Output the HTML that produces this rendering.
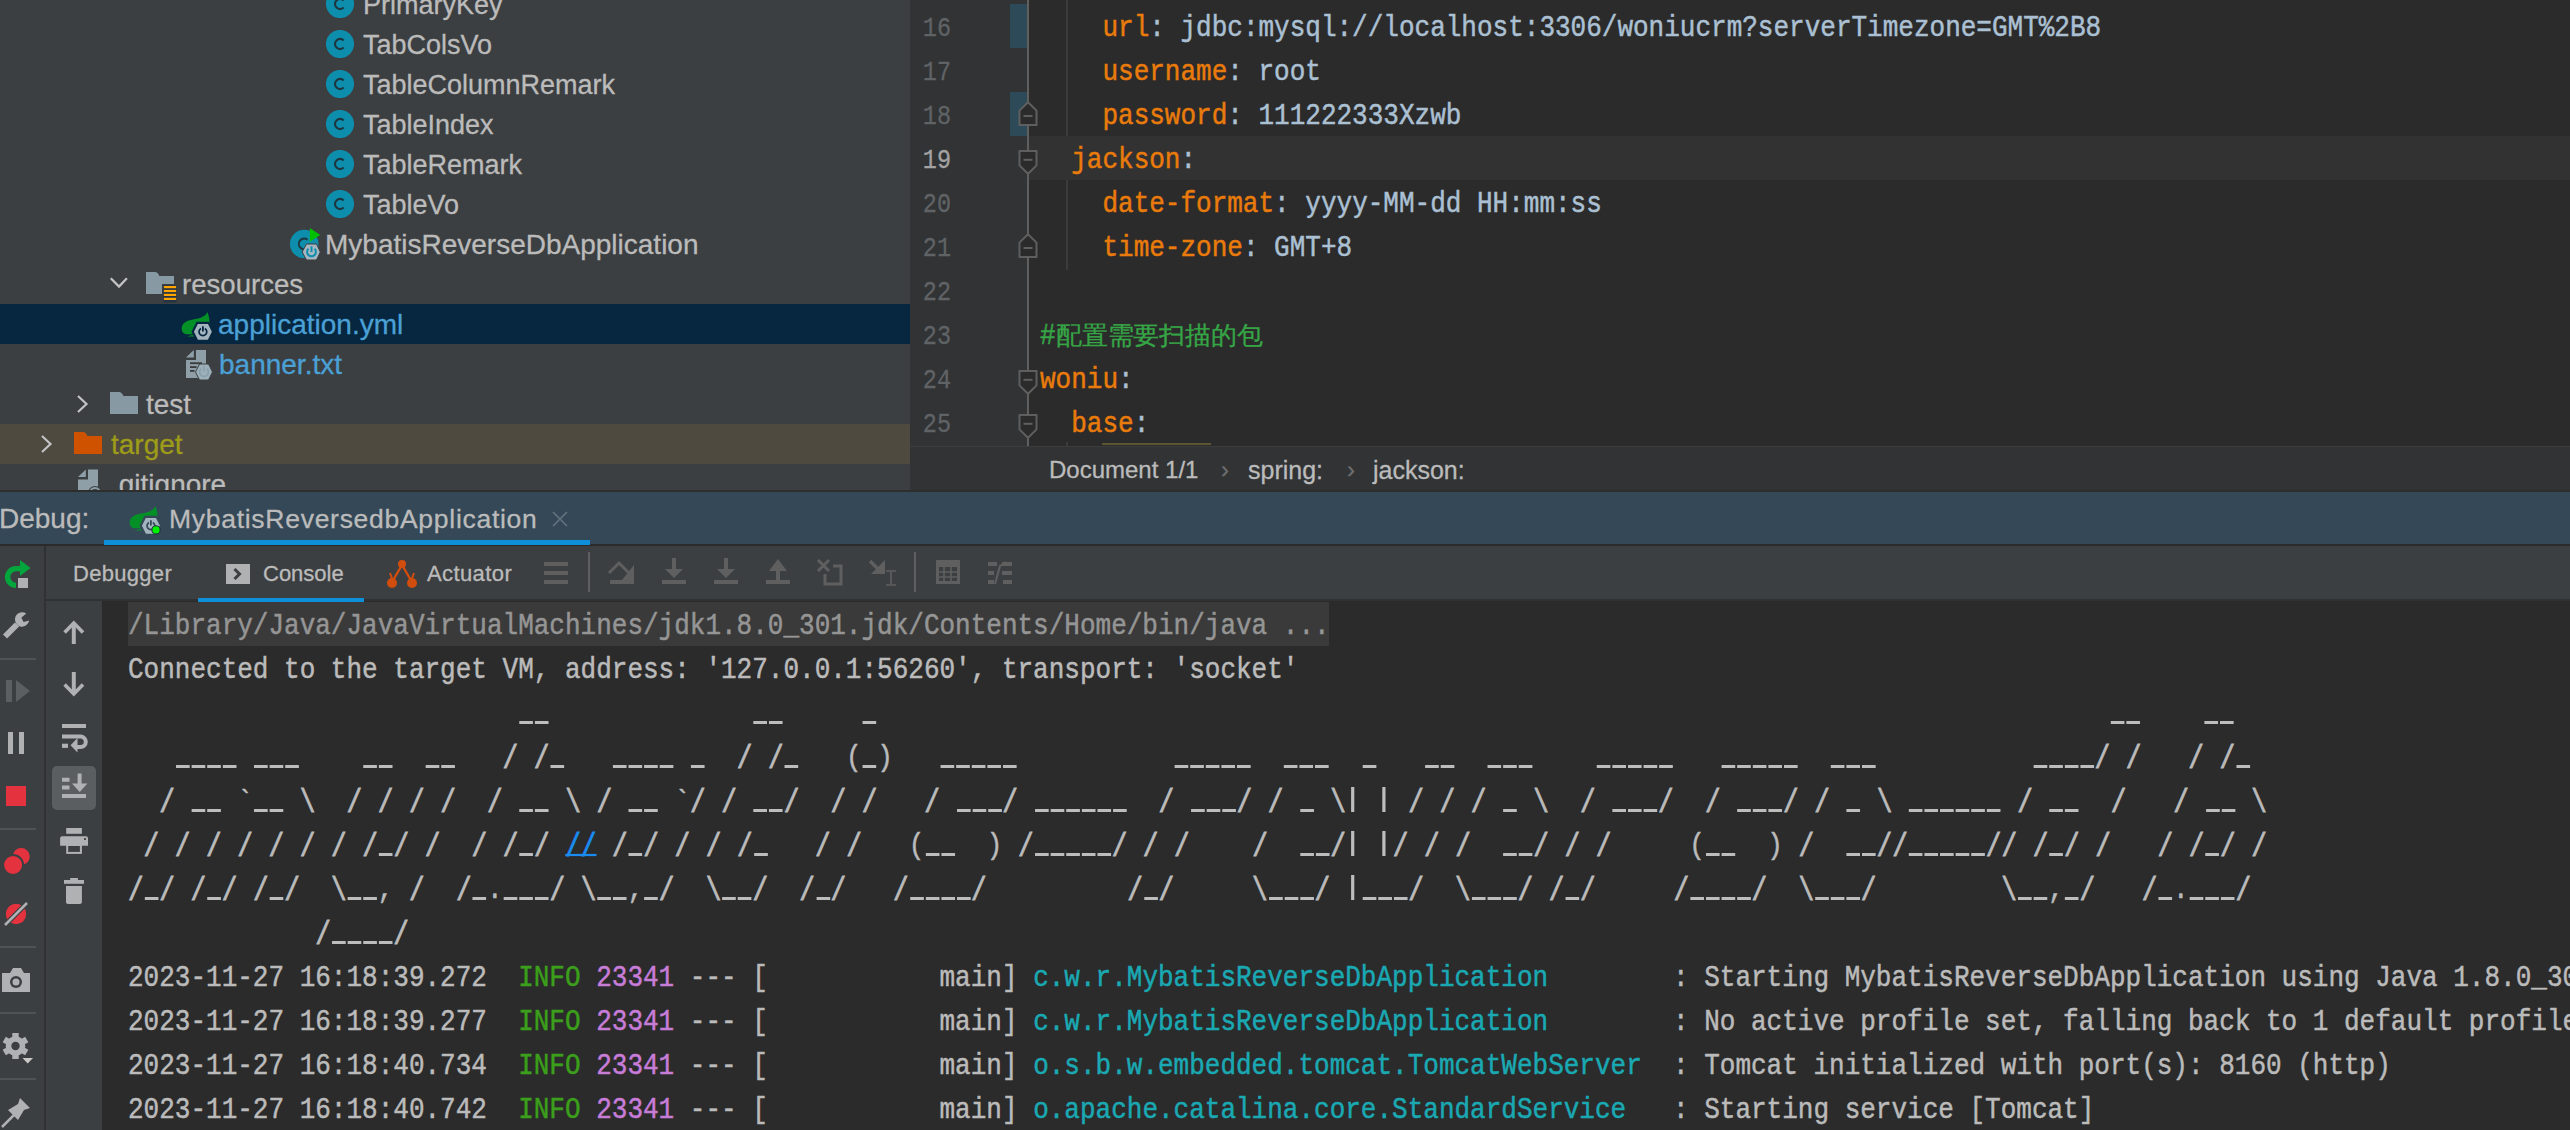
<!DOCTYPE html>
<html><head><meta charset="utf-8"><style>
*{margin:0;padding:0;box-sizing:border-box}
html,body{width:2570px;height:1130px;overflow:hidden;background:#2b2b2b}
body{position:relative;font-family:"Liberation Sans",sans-serif;color:#bbbbbb;-webkit-text-stroke:0.3px currentColor}
.a{position:absolute}
.m{font-family:"Liberation Mono",monospace;font-size:30px;white-space:pre;line-height:44px;transform:scaleX(0.86683);transform-origin:0 0;-webkit-text-stroke:0.5px currentColor}
.t{position:absolute;white-space:pre;font-size:27px;line-height:40px;height:40px;color:#bbbbbb;padding-top:1px}
.ln{position:absolute;left:850px;width:101px;text-align:right;font-family:"Liberation Mono",monospace;font-size:28px;line-height:44px;color:#606366;transform:scaleX(0.839);transform-origin:100% 0}
.k{color:#e97b0c}
.v{color:#abc0d3}
.g{color:#36a546}
.cjk{display:inline-block;font-size:25.3px;transform:scaleX(1.198);transform-origin:0 50%;-webkit-text-stroke:0.3px currentColor}
.ig{position:absolute;width:2px;background:#3b3b3b}
.lnk{color:#1a8cf0;text-decoration:underline;text-decoration-thickness:2px;text-underline-offset:-1.5px}
.sl{display:inline-block;transform:translateY(1.3px) scaleY(1.1);-webkit-text-stroke:0.75px currentColor}
.pp{display:inline-block;height:44px;vertical-align:top;color:transparent;-webkit-text-stroke:0;background:linear-gradient(#bdbdbd,#bdbdbd) 5.9px 7px/3.7px 25px no-repeat}
.u{display:inline-block;height:44px;vertical-align:top;color:transparent;-webkit-text-stroke:0;background:linear-gradient(to right,#bdbdbd 0,#bdbdbd 15.2px,transparent 15.2px,transparent 18px) 1.4px 29px/18px 3px repeat-x}
.info{color:#3b9f1b}
.pid{color:#c77dd8}
.lg{color:#1aa9b3}
</style></head><body>
<div class="a" style="left:0;top:0;width:910px;height:490px;background:#3c3f41"></div>
<div class="a" style="left:0;top:304px;width:910px;height:40px;background:#06273f"></div>
<div class="a" style="left:0;top:424px;width:910px;height:40px;background:#4f4a40"></div>
<svg class="a" style="left:326px;top:-10px" width="28" height="28" viewBox="0 0 28 28"><circle cx="14" cy="14" r="14.1" fill="#0d8eac"/><path d="M17.7 10.4 A5.1 5.1 0 1 0 17.7 17.6" fill="none" stroke="#1d3640" stroke-width="2.1"/></svg>
<div class="t" style="left:363px;top:-16px">PrimaryKey</div>
<svg class="a" style="left:326px;top:30px" width="28" height="28" viewBox="0 0 28 28"><circle cx="14" cy="14" r="14.1" fill="#0d8eac"/><path d="M17.7 10.4 A5.1 5.1 0 1 0 17.7 17.6" fill="none" stroke="#1d3640" stroke-width="2.1"/></svg>
<div class="t" style="left:363px;top:24px">TabColsVo</div>
<svg class="a" style="left:326px;top:70px" width="28" height="28" viewBox="0 0 28 28"><circle cx="14" cy="14" r="14.1" fill="#0d8eac"/><path d="M17.7 10.4 A5.1 5.1 0 1 0 17.7 17.6" fill="none" stroke="#1d3640" stroke-width="2.1"/></svg>
<div class="t" style="left:363px;top:64px">TableColumnRemark</div>
<svg class="a" style="left:326px;top:110px" width="28" height="28" viewBox="0 0 28 28"><circle cx="14" cy="14" r="14.1" fill="#0d8eac"/><path d="M17.7 10.4 A5.1 5.1 0 1 0 17.7 17.6" fill="none" stroke="#1d3640" stroke-width="2.1"/></svg>
<div class="t" style="left:363px;top:104px">TableIndex</div>
<svg class="a" style="left:326px;top:150px" width="28" height="28" viewBox="0 0 28 28"><circle cx="14" cy="14" r="14.1" fill="#0d8eac"/><path d="M17.7 10.4 A5.1 5.1 0 1 0 17.7 17.6" fill="none" stroke="#1d3640" stroke-width="2.1"/></svg>
<div class="t" style="left:363px;top:144px">TableRemark</div>
<svg class="a" style="left:326px;top:190px" width="28" height="28" viewBox="0 0 28 28"><circle cx="14" cy="14" r="14.1" fill="#0d8eac"/><path d="M17.7 10.4 A5.1 5.1 0 1 0 17.7 17.6" fill="none" stroke="#1d3640" stroke-width="2.1"/></svg>
<div class="t" style="left:363px;top:184px">TableVo</div>
<svg class="a" style="left:284px;top:220px" width="40" height="44" viewBox="0 0 40 44"><circle cx="20.2" cy="24" r="14.3" fill="#0d8eac"/><path d="M23.5 19.8 A5.3 5.3 0 1 0 23.5 28" fill="none" stroke="#1d3640" stroke-width="2"/><path d="M25.9 8 L36.2 15 L25.9 21.7 Z" fill="#00c000"/><path d="M22.5 24 H32.5 L36.3 32 L32.5 40 H22.5 L18.2 32 Z" fill="#a5b7c3" stroke="#3c3f41" stroke-width="1"/><path d="M24.4 28.8 A4.4 4.4 0 1 0 30.6 28.8" fill="none" stroke="#0d8eac" stroke-width="2"/><path d="M27.5 26.3 V32" stroke="#0d8eac" stroke-width="2"/></svg>
<div class="t" style="left:325px;top:224px;font-size:28px">MybatisReverseDbApplication</div>
<svg class="a" style="left:104px;top:268px" width="80" height="36" viewBox="0 0 80 36"><path d="M6.8 10.2 L15 18.6 L22.9 10.2" fill="none" stroke="#c4c4c4" stroke-width="2.2"/><path d="M42 4 H51 C53 4 54 5 55.4 8 H70 V26 H42 Z" fill="#879aa3"/><rect x="58" y="16" width="14" height="17" fill="#3c3f41"/><rect x="59.5" y="17.3" width="13" height="17" fill="#243245"/><rect x="59.9" y="18" width="12.2" height="2.2" fill="#ffa500"/><rect x="59.9" y="21.9" width="12.2" height="2.2" fill="#ffa500"/><rect x="59.9" y="25.8" width="12.2" height="2.2" fill="#ffa500"/><rect x="59.9" y="29.8" width="12.2" height="2.2" fill="#ffa500"/></svg>
<div class="t" style="left:182px;top:264px;font-size:27.6px">resources</div>
<svg class="a" style="left:176px;top:306px" width="40" height="40" viewBox="0 0 40 40"><path d="M31.5 6 C33.2 11 34.5 16.5 32.5 21 C29 26.5 19 28.5 11.5 28.3 C7.5 28.2 5.4 25.5 5.7 22 C6.1 17 11 14.3 17 13.5 C24 12.6 29.5 10.5 31.5 6 Z" fill="#039027"/><path d="M11 30.6 C14 29.4 16.5 28.7 18.5 28.7 L18.5 30.6 Z" fill="#039027"/><path d="M21.2 16.8 H32.6 L37.1 25.8 L32.6 34.8 H21.2 L16.7 25.8 Z" fill="#a3b4bf" stroke="#06273f" stroke-width="2.2"/><path d="M24.95 22.4 A3.9 3.9 0 1 0 28.85 22.4" fill="none" stroke="#06273f" stroke-width="1.7"/><path d="M26.9 20.2 V25.4" stroke="#06273f" stroke-width="1.8"/></svg>
<div class="t" style="left:218px;top:304px;color:#4ba0d6;font-size:28px">application.yml</div>
<svg class="a" style="left:180px;top:346px" width="40" height="40" viewBox="0 0 40 40"><path d="M6 11.6 L13.8 4 V11.6 Z" fill="#8e9fa8"/><path d="M16 4 H26 V32 H6 V14 H16 Z" fill="#8e9fa8"/><rect x="10" y="16.3" width="12" height="1.8" fill="#3a3b3c"/><rect x="10" y="20.2" width="6.5" height="1.8" fill="#3a3b3c"/><rect x="10" y="24" width="4.5" height="1.8" fill="#3a3b3c"/><path d="M19.5 18 H28.5 L32.5 26 L28.5 34 H19.5 L15.5 26 Z" fill="#9cb0bb" stroke="#3c3f41" stroke-width="1"/><path d="M21.3 22.6 A4.4 4.4 0 1 0 26.7 22.6" fill="none" stroke="#8a9ea8" stroke-width="1.6"/><path d="M24 20.5 V25.5" stroke="#8a9ea8" stroke-width="1.6"/></svg>
<div class="t" style="left:219px;top:344px;color:#4ba0d6;font-size:28px">banner.txt</div>
<svg class="a" style="left:76px;top:394px" width="14" height="20" viewBox="0 0 14 20"><path d="M2 2 L10.5 10 L2 18" fill="none" stroke="#c4c4c4" stroke-width="2.2"/></svg>
<svg class="a" style="left:110px;top:392px" width="28" height="22" viewBox="0 0 28 22"><path d="M0 0 H9 C11 0 12 1 13.4 4 H28 V22 H0 Z" fill="#879aa3"/></svg>
<div class="t" style="left:146px;top:384px;font-size:28px">test</div>
<svg class="a" style="left:40px;top:434px" width="14" height="20" viewBox="0 0 14 20"><path d="M2 2 L10.5 10 L2 18" fill="none" stroke="#c4c4c4" stroke-width="2.2"/></svg>
<svg class="a" style="left:74px;top:432px" width="28" height="22" viewBox="0 0 28 22"><path d="M0 0 H9 C11 0 12 1 13.4 4 H28 V22 H0 Z" fill="#cf5200"/></svg>
<div class="t" style="left:111px;top:424px;color:#9e9c18;font-size:28px">target</div>
<svg class="a" style="left:76px;top:466px" width="30" height="30" viewBox="0 0 30 30"><path d="M2 11 L9.8 3.4 V11 Z" fill="#8e9fa8"/><path d="M12 3.4 H22 V30 H2 V13.4 H12 Z" fill="#8e9fa8"/><circle cx="19" cy="27" r="7" fill="#3c3f41"/><circle cx="19" cy="27" r="5" fill="none" stroke="#8e9fa8" stroke-width="2"/></svg>
<div class="t" style="left:111px;top:464px;font-size:28px">.gitignore</div>
<div class="a" style="left:910px;top:0;width:117px;height:446px;background:#313335"></div>
<div class="a" style="left:1027px;top:0;width:1543px;height:446px;background:#2b2b2b"></div>
<div class="a" style="left:1029px;top:136px;width:1541px;height:44px;background:#323232"></div>
<div class="a" style="left:1010px;top:4px;width:17px;height:44px;background:#2c4a57"></div>
<div class="a" style="left:1010px;top:92px;width:17px;height:44px;background:#2c4a57"></div>
<div class="ig" style="left:1066px;top:0;height:136px"></div>
<div class="ig" style="left:1066px;top:180px;height:90px"></div>
<div class="ig" style="left:1066px;top:442px;height:4px"></div>
<div class="a" style="left:1027px;top:0;width:2px;height:446px;background:#5f5f5f"></div>
<svg class="a" style="left:1018px;top:101px" width="20" height="26" viewBox="0 0 20 26"><path d="M1.5 24 V9.6 L10 1.2 L18.5 9.6 V24 Z" fill="#2b2b2b" stroke="#5f5f5f" stroke-width="2"/><path d="M5.5 15 H14.5" stroke="#5f5f5f" stroke-width="2"/></svg>
<svg class="a" style="left:1018px;top:150px" width="20" height="26" viewBox="0 0 20 26"><path d="M1.5 1 V15.4 L10 23.8 L18.5 15.4 V1 Z" fill="#2b2b2b" stroke="#5f5f5f" stroke-width="2"/><path d="M5.5 9.8 H14.5" stroke="#5f5f5f" stroke-width="2"/></svg>
<svg class="a" style="left:1018px;top:233px" width="20" height="26" viewBox="0 0 20 26"><path d="M1.5 24 V9.6 L10 1.2 L18.5 9.6 V24 Z" fill="#2b2b2b" stroke="#5f5f5f" stroke-width="2"/><path d="M5.5 15 H14.5" stroke="#5f5f5f" stroke-width="2"/></svg>
<svg class="a" style="left:1018px;top:370px" width="20" height="26" viewBox="0 0 20 26"><path d="M1.5 1 V15.4 L10 23.8 L18.5 15.4 V1 Z" fill="#2b2b2b" stroke="#5f5f5f" stroke-width="2"/><path d="M5.5 9.8 H14.5" stroke="#5f5f5f" stroke-width="2"/></svg>
<svg class="a" style="left:1018px;top:414px" width="20" height="26" viewBox="0 0 20 26"><path d="M1.5 1 V15.4 L10 23.8 L18.5 15.4 V1 Z" fill="#2b2b2b" stroke="#5f5f5f" stroke-width="2"/><path d="M5.5 9.8 H14.5" stroke="#5f5f5f" stroke-width="2"/></svg>
<div class="ln" style="top:7px;color:#606366">16</div>
<div class="a m v" style="left:1040px;top:6px">    <span class="k">url</span>: jdbc:mysql://localhost:3306/woniucrm?serverTimezone=GMT%2B8</div>
<div class="ln" style="top:51px;color:#606366">17</div>
<div class="a m v" style="left:1040px;top:50px">    <span class="k">username</span>: root</div>
<div class="ln" style="top:95px;color:#606366">18</div>
<div class="a m v" style="left:1040px;top:94px">    <span class="k">password</span>: 111222333Xzwb</div>
<div class="ln" style="top:139px;color:#a4a3a3">19</div>
<div class="a m v" style="left:1040px;top:138px">  <span class="k">jackson</span>:</div>
<div class="ln" style="top:183px;color:#606366">20</div>
<div class="a m v" style="left:1040px;top:182px">    <span class="k">date-format</span>: yyyy-MM-dd HH:mm:ss</div>
<div class="ln" style="top:227px;color:#606366">21</div>
<div class="a m v" style="left:1040px;top:226px">    <span class="k">time-zone</span>: GMT+8</div>
<div class="ln" style="top:271px;color:#606366">22</div>
<div class="a m v" style="left:1040px;top:270px"></div>
<div class="ln" style="top:315px;color:#606366">23</div>
<div class="a m v" style="left:1040px;top:314px"><span class="g">#<span class="cjk">配置需要扫描的包</span></span></div>
<div class="ln" style="top:359px;color:#606366">24</div>
<div class="a m v" style="left:1040px;top:358px"><span class="k">woniu</span>:</div>
<div class="ln" style="top:403px;color:#606366">25</div>
<div class="a m v" style="left:1040px;top:402px">  <span class="k">base</span>:</div>
<div class="a" style="left:1102px;top:443px;width:109px;height:2px;background:#5b5632"></div>
<div class="a" style="left:910px;top:446px;width:1660px;height:45px;background:#313335;border-top:1px solid #3a3c3e"></div>
<div class="a" style="left:1049px;top:450px;font-size:24px;line-height:40px;white-space:pre">Document 1/1</div>
<div class="a" style="left:1221px;top:450px;font-size:24px;line-height:40px;color:#6e6e6e">›</div>
<div class="a" style="left:1248px;top:450px;font-size:25px;line-height:40px">spring:</div>
<div class="a" style="left:1347px;top:450px;font-size:24px;line-height:40px;color:#6e6e6e">›</div>
<div class="a" style="left:1373px;top:450px;font-size:25px;line-height:40px">jackson:</div>
<div class="a" style="left:0;top:490px;width:2570px;height:2px;background:#2e2e2d"></div>
<div class="a" style="left:0;top:492px;width:2570px;height:52px;background:#344857"></div>
<div class="a" style="left:0;top:544px;width:2570px;height:2px;background:#2b2b2b"></div>
<div class="a" style="left:-1px;top:497px;font-size:28px;line-height:44px">Debug:</div>
<svg class="a" style="left:124px;top:500px" width="40" height="40" viewBox="0 0 40 40"><path d="M31.5 6 C33.2 11 34.5 16.5 32.5 21 C29 26.5 19 28.5 11.5 28.3 C7.5 28.2 5.4 25.5 5.7 22 C6.1 17 11 14.3 17 13.5 C24 12.6 29.5 10.5 31.5 6 Z" fill="#039027"/><path d="M11 30.6 C14 29.4 16.5 28.7 18.5 28.7 L18.5 30.6 Z" fill="#039027"/><path d="M21.2 16.8 H32.6 L37.1 25.8 L32.6 34.8 H21.2 L16.7 25.8 Z" fill="#a3b4bf" stroke="#344857" stroke-width="2.2"/><path d="M24.95 22.4 A3.9 3.9 0 1 0 28.85 22.4" fill="none" stroke="#344857" stroke-width="1.7"/><path d="M26.9 20.2 V25.4" stroke="#344857" stroke-width="1.8"/><circle cx="32" cy="29.9" r="4.1" fill="#00f000" stroke="#1c2a33" stroke-width="1"/></svg>
<div class="a" style="left:169px;top:496.8px;font-size:26.5px;line-height:44px;letter-spacing:0.72px">MybatisReversedbApplication</div>
<svg class="a" style="left:551px;top:510px" width="18" height="18" viewBox="0 0 18 18"><path d="M2 2 L16 16 M16 2 L2 16" stroke="#62737e" stroke-width="1.6"/></svg>
<div class="a" style="left:104px;top:540px;width:486px;height:5px;background:#0d8fd9"></div>
<div class="a" style="left:0;top:546px;width:44px;height:584px;background:#3c3f41"></div>
<div class="a" style="left:44px;top:546px;width:2px;height:584px;background:#2f3133"></div>
<div class="a" style="left:46px;top:546px;width:2524px;height:53px;background:#3c3f41"></div>
<div class="a" style="left:46px;top:599px;width:2524px;height:2px;background:#2f3133"></div>
<div class="a" style="left:46px;top:601px;width:56px;height:529px;background:#3c3f41"></div>
<div class="a" style="left:102px;top:601px;width:2468px;height:529px;background:#2b2b2b"></div>
<div class="a" style="left:73px;top:554px;font-size:22px;line-height:40px;letter-spacing:0.3px">Debugger</div>
<svg class="a" style="left:226px;top:564px" width="24" height="20" viewBox="0 0 24 20"><rect width="24" height="20" fill="#afb1b3"/><path d="M8.5 5 L13.5 10 L8.5 15" fill="none" stroke="#3c3f41" stroke-width="3"/></svg>
<div class="a" style="left:263px;top:554px;font-size:22px;line-height:40px">Console</div>
<div class="a" style="left:198px;top:598px;width:166px;height:4px;background:#0d8fd9"></div>
<svg class="a" style="left:387px;top:559px" width="30" height="30" viewBox="0 0 30 30"><path d="M5 23 L15 6 L25 23" fill="none" stroke="#d04d0e" stroke-width="2.4"/><circle cx="15" cy="5" r="4" fill="#d04d0e"/><circle cx="5" cy="24" r="5" fill="#d04d0e"/><circle cx="25" cy="24" r="5" fill="#d04d0e"/><path d="M3 14 L6 22 M27 14 L24 22" stroke="#d04d0e" stroke-width="2"/></svg>
<div class="a" style="left:427px;top:554px;font-size:22px;line-height:40px;letter-spacing:0.4px">Actuator</div>
<svg class="a" style="left:0;top:0" width="1100" height="600" viewBox="0 0 1100 600"><rect x="544" y="562" width="24" height="4" fill="#5f5f5f"/><rect x="544" y="571" width="24" height="4" fill="#5f5f5f"/><rect x="544" y="580" width="24" height="4" fill="#5f5f5f"/><rect x="588" y="552" width="2" height="40" fill="#5f5f5f"/><path d="M609 573 L619 563 L629 573" fill="none" stroke="#5f5f5f" stroke-width="3"/><path d="M622 580 H634 V565 Z" fill="#5f5f5f"/><rect x="610" y="580" width="24" height="4" fill="#5f5f5f"/><rect x="672" y="558" width="4" height="12" fill="#5f5f5f"/><path d="M665 569 H683 L674 578 Z" fill="#5f5f5f"/><rect x="662" y="580" width="24" height="4" fill="#5f5f5f"/><rect x="724" y="558" width="4" height="12" fill="#5f5f5f"/><path d="M717 569 H735 L726 578 Z" fill="#5f5f5f"/><rect x="714" y="580" width="24" height="4" fill="#5f5f5f"/><rect x="776" y="569" width="4" height="12" fill="#5f5f5f"/><path d="M769 571 H787 L778 559 Z" fill="#5f5f5f"/><rect x="766" y="580" width="24" height="4" fill="#5f5f5f"/><path d="M818 560 L829 571 M829 560 L818 571" stroke="#5f5f5f" stroke-width="3"/><path d="M825 574 V584 H841 V566 H833" fill="none" stroke="#5f5f5f" stroke-width="3"/><path d="M870 561 L882 573" stroke="#5f5f5f" stroke-width="3.5"/><path d="M871 574 H885 V560 Z" fill="#5f5f5f"/><path d="M886 571 H896 M886 585 H896 M891 571 V585" stroke="#5f5f5f" stroke-width="1.6"/><rect x="914" y="552" width="2" height="40" fill="#5f5f5f"/><rect x="937.5" y="561.5" width="21" height="21" fill="none" stroke="#5f5f5f" stroke-width="3"/><rect x="937" y="561" width="22" height="6" fill="#5f5f5f"/><path d="M937 572 H959 M937 577 H959 M944 567 V583 M951 567 V583" stroke="#5f5f5f" stroke-width="1.6"/><rect x="988" y="562" width="9" height="4" fill="#5f5f5f"/><rect x="1002" y="562" width="10" height="4" fill="#5f5f5f"/><rect x="988" y="571" width="6" height="4" fill="#5f5f5f"/><rect x="1002" y="571" width="10" height="4" fill="#5f5f5f"/><rect x="988" y="580" width="6" height="4" fill="#5f5f5f"/><rect x="1003" y="580" width="9" height="4" fill="#5f5f5f"/><path d="M995 584 L1000 566 L1006 562" fill="none" stroke="#5f5f5f" stroke-width="2"/></svg>
<svg class="a" style="left:0;top:0" width="110" height="1130" viewBox="0 0 110 1130"><path d="M21 568.6 H16 A8.4 8.4 0 0 0 16 585.4" fill="none" stroke="#04a53c" stroke-width="5.4"/><path d="M20 560 L30.6 568 L20 576 Z" fill="#04a53c"/><rect x="18" y="578" width="10" height="10" fill="#afb1b3"/><path d="M5 636.5 L17 624.5" stroke="#afb1b3" stroke-width="5.8"/><path d="M26.2 613.6 A7.2 7.2 0 1 0 29.2 620.6 L23.6 622 L21.3 617.8 Z" fill="#afb1b3"/><rect x="0" y="658" width="36" height="2" fill="#505355"/><rect x="6" y="680" width="6" height="22" fill="#5c5f61"/><path d="M16 680 L30 691 L16 702 Z" fill="#5c5f61"/><rect x="8" y="732" width="5" height="22" fill="#afb1b3"/><rect x="19" y="732" width="5" height="22" fill="#afb1b3"/><rect x="6" y="786" width="20" height="20" fill="#e5323f"/><rect x="0" y="828" width="36" height="2" fill="#505355"/><circle cx="21.2" cy="856.4" r="8.5" fill="#e5323f"/><circle cx="13.1" cy="865" r="10" fill="#e5323f" stroke="#3c3f41" stroke-width="2"/><circle cx="16" cy="914" r="10.2" fill="#e5323f"/><path d="M4 926 L28 902" stroke="#3c3f41" stroke-width="5"/><path d="M5 925 L27 903" stroke="#afb1b3" stroke-width="2.5"/><rect x="0" y="946" width="36" height="2" fill="#505355"/><path d="M2 973 H10 L13 968 H21 L24 973 H30 V992 H2 Z" fill="#afb1b3"/><circle cx="16" cy="982" r="6" fill="#3c3f41"/><circle cx="16" cy="982" r="3.5" fill="#afb1b3"/><rect x="0" y="1012" width="36" height="2" fill="#505355"/><rect x="12.3" y="1033" width="6.4" height="7" fill="#afb1b3" transform="rotate(0 15.5 1046)"/><rect x="12.3" y="1033" width="6.4" height="7" fill="#afb1b3" transform="rotate(60 15.5 1046)"/><rect x="12.3" y="1033" width="6.4" height="7" fill="#afb1b3" transform="rotate(120 15.5 1046)"/><rect x="12.3" y="1033" width="6.4" height="7" fill="#afb1b3" transform="rotate(180 15.5 1046)"/><rect x="12.3" y="1033" width="6.4" height="7" fill="#afb1b3" transform="rotate(240 15.5 1046)"/><rect x="12.3" y="1033" width="6.4" height="7" fill="#afb1b3" transform="rotate(300 15.5 1046)"/><circle cx="15.5" cy="1046" r="9.8" fill="#afb1b3"/><circle cx="15.5" cy="1046" r="4.2" fill="#3c3f41"/><path d="M20.5 1057 H35 L27.7 1064.5 Z" fill="#3c3f41"/><path d="M22.5 1058 H33 L27.7 1063.5 Z" fill="#c8c8c8"/><rect x="0" y="1078" width="36" height="2" fill="#505355"/><path d="M2 1127 L14 1115" stroke="#afb1b3" stroke-width="2.5"/><path d="M20 1098 L30 1108 L24 1110 L18 1120 L8 1110 L18 1104 Z" fill="#afb1b3"/><path d="M73.8 644 V623" stroke="#afb1b3" stroke-width="4"/><path d="M64.6 632.5 L73.8 623 L83 632.5" fill="none" stroke="#afb1b3" stroke-width="3.6"/><path d="M73.8 672 V693" stroke="#afb1b3" stroke-width="4"/><path d="M64.6 684.5 L73.8 694 L83 684.5" fill="none" stroke="#afb1b3" stroke-width="3.6"/><path d="M62 726 H86" stroke="#afb1b3" stroke-width="4"/><path d="M62 736.5 H80.5 A5.3 5.3 0 0 1 80.5 747.1 H75" fill="none" stroke="#afb1b3" stroke-width="4"/><path d="M62 745.8 H68" stroke="#afb1b3" stroke-width="4.2"/><path d="M77.5 738 V752.5 L70.5 745.2 Z" fill="#afb1b3"/><rect x="52" y="766" width="44" height="44" rx="5" fill="#5a5e61"/><path d="M62 796 H86 M62 779.8 H69.5 M62 787.4 H69.5" stroke="#afb1b3" stroke-width="4"/><path d="M79.6 773.5 V785" stroke="#afb1b3" stroke-width="4"/><path d="M72 783.5 H87.4 L79.7 792 Z" fill="#afb1b3"/><rect x="66.2" y="828" width="15.7" height="5.8" fill="#afb1b3"/><path d="M60.1 845.8 V838.2 Q60.1 836.2 62.1 836.2 H86 Q88 836.2 88 838.2 V845.8 Z" fill="#afb1b3"/><circle cx="85" cy="839" r="1" fill="#2b2b2b"/><rect x="67.2" y="845" width="13.7" height="7.9" fill="none" stroke="#afb1b3" stroke-width="2"/><rect x="64" y="880" width="20" height="3.8" fill="#afb1b3"/><rect x="70.2" y="878" width="7.7" height="3" fill="#afb1b3"/><path d="M66 886 H81.9 V901.9 Q81.9 903.9 79.9 903.9 H68 Q66 903.9 66 901.9 Z" fill="#afb1b3"/></svg>
<div class="a" style="left:128px;top:602px;width:1201px;height:44px;background:#3a3a3a"></div>
<div class="a m" style="left:128px;top:604.3px;color:#bbbbbb"><span style="color:#959595">/Library/Java/JavaVirtualMachines/jdk1.8.0_301.jdk/Contents/Home/bin/java ...</span>
Connected to the target VM, address: '127.0.0.1:56260', transport: 'socket'
                         <span class="u">__</span>             <span class="u">__</span>     <span class="u">_</span>                                                                               <span class="u">__</span>    <span class="u">__</span>
   <span class="u">____</span> <span class="u">___</span>    <span class="u">__</span>  <span class="u">__</span>   <span class="sl">/</span> <span class="sl">/</span><span class="u">_</span>   <span class="u">____</span> <span class="u">_</span>  <span class="sl">/</span> <span class="sl">/</span><span class="u">_</span>   (<span class="u">_</span>)   <span class="u">_____</span>          <span class="u">_____</span>  <span class="u">___</span>  <span class="u">_</span>   <span class="u">__</span>  <span class="u">___</span>    <span class="u">_____</span>   <span class="u">_____</span>  <span class="u">___</span>          <span class="u">____</span><span class="sl">/</span> <span class="sl">/</span>   <span class="sl">/</span> <span class="sl">/</span><span class="u">_</span>
  <span class="sl">/</span> <span class="u">__</span> `<span class="u">__</span> <span class="sl">\</span>  <span class="sl">/</span> <span class="sl">/</span> <span class="sl">/</span> <span class="sl">/</span>  <span class="sl">/</span> <span class="u">__</span> <span class="sl">\</span> <span class="sl">/</span> <span class="u">__</span> `<span class="sl">/</span> <span class="sl">/</span> <span class="u">__</span><span class="sl">/</span>  <span class="sl">/</span> <span class="sl">/</span>   <span class="sl">/</span> <span class="u">___</span><span class="sl">/</span> <span class="u">______</span>  <span class="sl">/</span> <span class="u">___</span><span class="sl">/</span> <span class="sl">/</span> <span class="u">_</span> <span class="sl">\</span><span class="pp">|</span> <span class="pp">|</span> <span class="sl">/</span> <span class="sl">/</span> <span class="sl">/</span> <span class="u">_</span> <span class="sl">\</span>  <span class="sl">/</span> <span class="u">___</span><span class="sl">/</span>  <span class="sl">/</span> <span class="u">___</span><span class="sl">/</span> <span class="sl">/</span> <span class="u">_</span> <span class="sl">\</span> <span class="u">______</span> <span class="sl">/</span> <span class="u">__</span>  <span class="sl">/</span>   <span class="sl">/</span> <span class="u">__</span> <span class="sl">\</span>
 <span class="sl">/</span> <span class="sl">/</span> <span class="sl">/</span> <span class="sl">/</span> <span class="sl">/</span> <span class="sl">/</span> <span class="sl">/</span> <span class="sl">/</span><span class="u">_</span><span class="sl">/</span> <span class="sl">/</span>  <span class="sl">/</span> <span class="sl">/</span><span class="u">_</span><span class="sl">/</span> <span class="lnk sl">//</span> <span class="sl">/</span><span class="u">_</span><span class="sl">/</span> <span class="sl">/</span> <span class="sl">/</span> <span class="sl">/</span><span class="u">_</span>   <span class="sl">/</span> <span class="sl">/</span>   (<span class="u">__</span>  ) <span class="sl">/</span><span class="u">_____</span><span class="sl">/</span> <span class="sl">/</span> <span class="sl">/</span>    <span class="sl">/</span>  <span class="u">__</span><span class="sl">/</span><span class="pp">|</span> <span class="pp">|</span><span class="sl">/</span> <span class="sl">/</span> <span class="sl">/</span>  <span class="u">__</span><span class="sl">/</span> <span class="sl">/</span> <span class="sl">/</span>     (<span class="u">__</span>  ) <span class="sl">/</span>  <span class="u">__</span><span class="sl">//</span><span class="u">_____</span><span class="sl">//</span> <span class="sl">/</span><span class="u">_</span><span class="sl">/</span> <span class="sl">/</span>   <span class="sl">/</span> <span class="sl">/</span><span class="u">_</span><span class="sl">/</span> <span class="sl">/</span>
<span class="sl">/</span><span class="u">_</span><span class="sl">/</span> <span class="sl">/</span><span class="u">_</span><span class="sl">/</span> <span class="sl">/</span><span class="u">_</span><span class="sl">/</span>  <span class="sl">\</span><span class="u">__</span>, <span class="sl">/</span>  <span class="sl">/</span><span class="u">_</span>.<span class="u">___</span><span class="sl">/</span> <span class="sl">\</span><span class="u">__</span>,<span class="u">_</span><span class="sl">/</span>  <span class="sl">\</span><span class="u">__</span><span class="sl">/</span>  <span class="sl">/</span><span class="u">_</span><span class="sl">/</span>   <span class="sl">/</span><span class="u">____</span><span class="sl">/</span>         <span class="sl">/</span><span class="u">_</span><span class="sl">/</span>     <span class="sl">\</span><span class="u">___</span><span class="sl">/</span> <span class="pp">|</span><span class="u">___</span><span class="sl">/</span>  <span class="sl">\</span><span class="u">___</span><span class="sl">/</span> <span class="sl">/</span><span class="u">_</span><span class="sl">/</span>     <span class="sl">/</span><span class="u">____</span><span class="sl">/</span>  <span class="sl">\</span><span class="u">___</span><span class="sl">/</span>        <span class="sl">\</span><span class="u">__</span>,<span class="u">_</span><span class="sl">/</span>   <span class="sl">/</span><span class="u">_</span>.<span class="u">___</span><span class="sl">/</span>
            <span class="sl">/</span><span class="u">____</span><span class="sl">/</span>
2023-11-27 16:18:39.272  <span class="info">INFO</span> <span class="pid">23341</span> --- [           main] <span class="lg">c.w.r.MybatisReverseDbApplication       </span> : Starting MybatisReverseDbApplication using Java 1.8.0_301 on MacBook-Pro.local with PID 23341
2023-11-27 16:18:39.277  <span class="info">INFO</span> <span class="pid">23341</span> --- [           main] <span class="lg">c.w.r.MybatisReverseDbApplication       </span> : No active profile set, falling back to 1 default profile: &quot;default&quot;
2023-11-27 16:18:40.734  <span class="info">INFO</span> <span class="pid">23341</span> --- [           main] <span class="lg">o.s.b.w.embedded.tomcat.TomcatWebServer </span> : Tomcat initialized with port(s): 8160 (http)
2023-11-27 16:18:40.742  <span class="info">INFO</span> <span class="pid">23341</span> --- [           main] <span class="lg">o.apache.catalina.core.StandardService  </span> : Starting service [Tomcat]</div>
</body></html>
